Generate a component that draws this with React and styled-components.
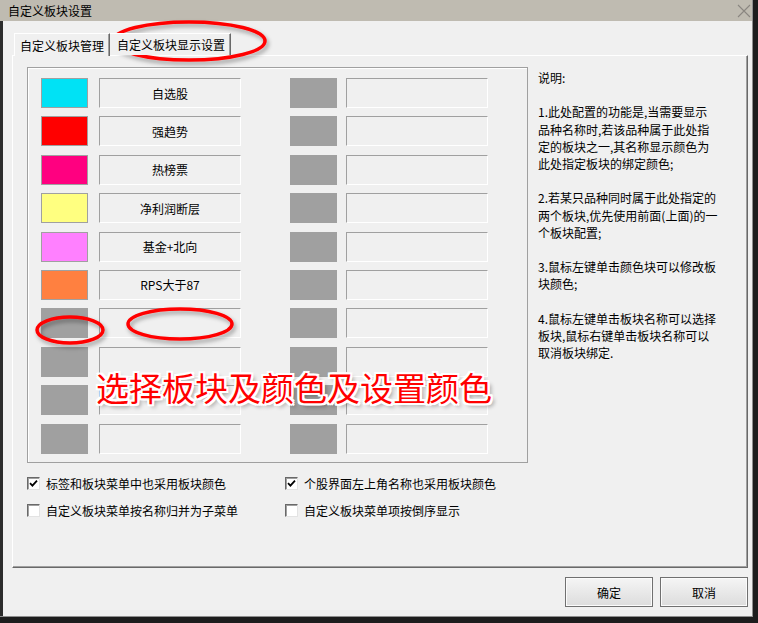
import React from "react"
import styled, { createGlobalStyle } from "styled-components"

const GlobalStyle = createGlobalStyle`
  html, body { margin: 0; padding: 0; }
  body {
    background: #1d1d1d;
    font-family: "Noto Sans CJK SC", "Liberation Sans", sans-serif;
    font-size: 12px;
    color: #000;
  }
`

const Screen = styled.div`
  position: relative;
  width: 758px;
  height: 623px;
  overflow: hidden;
  background: #1d1d1d;
`

const Window = styled.div`
  width: 753px;
  height: 617px;
  display: flex;
  flex-direction: column;
  box-sizing: border-box;
  border-right: 1px solid #8e8e8e;
  border-bottom: 1px solid #8e8e8e;
`

const TitleBar = styled.div`
  height: 21px;
  flex: none;
  background: #bfbbb1;
  display: flex;
  align-items: center;
  justify-content: space-between;
  padding: 0 1px 0 8px;
  font-size: 12px;
  color: #000;
`

const Body = styled.div`
  flex: 1;
  background: #f0f0f0;
  border-left: 3px solid #2c2c2c;
  padding: 10px 4px 0 9px;
  display: flex;
  flex-direction: column;
`

const TabRow = styled.div`
  height: 24px;
  display: flex;
  align-items: flex-end;
  padding-left: 2px;
  position: relative;
  z-index: 1;
`

const Tab = styled.div`
  box-sizing: border-box;
  height: ${p => (p.$active ? 23 : 22)}px;
  margin-bottom: ${p => (p.$active ? -1 : 0)}px;
  padding: 0 5px 0 ${p => (p.$active ? 5 : 7)}px;
  background: #f0f0f0;
  border-top: 1px solid #fff;
  border-left: ${p => (p.$active ? "1px solid #fff" : "none")};
  border-right: 1px solid #696969;
  box-shadow: inset -1px 0 #a0a0a0;
  display: flex;
  align-items: center;
  white-space: nowrap;
`

const Panel = styled.div`
  box-sizing: border-box;
  height: 513px;
  border-top: 1px solid #fff;
  border-left: 1px solid #fff;
  border-right: 1px solid #696969;
  border-bottom: 1px solid #696969;
  box-shadow: inset -1px -1px #a0a0a0;
  padding: 11px 0 0 14px;
  display: flex;
  flex-direction: column;
`

const TopRow = styled.div`
  display: flex;
  align-items: flex-start;
`

const GroupBox = styled.div`
  box-sizing: border-box;
  width: 501px;
  height: 396px;
  border: 1px solid #a0a0a0;
  box-shadow: inset 1px 1px #fff;
  padding: 10px 0 0 13px;
  display: flex;
  gap: 49px;
`

const Column = styled.div`
  display: flex;
  flex-direction: column;
  gap: 8.4px;
`

const Row = styled.div`
  display: flex;
  gap: ${p => p.$gap}px;
`

const Swatch = styled.div`
  box-sizing: border-box;
  width: 47px;
  height: 30px;
  background: ${p => p.$color};
  border: 1px solid #a0a0a0;
`

const NameBox = styled.div`
  box-sizing: border-box;
  width: 142px;
  height: 30px;
  border-top: 1px solid #a0a0a0;
  border-left: 1px solid #a0a0a0;
  border-right: 1px solid #fff;
  border-bottom: 1px solid #fff;
  display: flex;
  align-items: center;
  justify-content: center;
  font-size: 12px;
`

const Desc = styled.div`
  margin: 2px 0 0 10px;
  font-size: 12px;
  line-height: 17.2px;
  white-space: pre;
`

const CheckGrid = styled.div`
  margin-top: 14px;
  display: grid;
  grid-template-columns: 258px 1fr;
  row-gap: 14px;
`

const CheckItem = styled.label`
  display: flex;
  align-items: center;
  gap: 6px;
  height: 13px;
  font-size: 12px;
  white-space: nowrap;
`

const Box = styled.span`
  box-sizing: border-box;
  width: 13px;
  height: 13px;
  background: #fff;
  border-top: 1px solid #696969;
  border-left: 1px solid #696969;
  border-right: 1px solid #e3e3e3;
  border-bottom: 1px solid #e3e3e3;
  box-shadow: inset 1px 1px #a0a0a0;
  display: flex;
  align-items: center;
  justify-content: center;
`

const Footer = styled.div`
  margin-top: 9px;
  display: flex;
  justify-content: flex-end;
  gap: 7px;
`

const Button = styled.button`
  box-sizing: border-box;
  width: 88px;
  height: 30px;
  border: 1px solid #707070;
  background: linear-gradient(#f5f5f5, #dcdcdc);
  box-shadow: inset 0 0 0 1px #fbfbfb;
  font-family: inherit;
  font-size: 12px;
  color: #000;
  padding: 0;
`

const Overlay = styled.svg`
  position: absolute;
  left: 0;
  top: 0;
  pointer-events: none;
`

const Note = styled.div`
  position: absolute;
  left: 96px;
  top: 371px;
  font-size: 33px;
  line-height: 33px;
  color: #ff0000;
  white-space: nowrap;
  pointer-events: none;
  text-shadow: 2px 0 #fff, -2px 0 #fff, 0 2px #fff, 0 -2px #fff,
    2px 2px #fff, -2px -2px #fff, 2px -2px #fff, -2px 2px #fff,
    3px 3px 4px rgba(0, 0, 0, 0.45);
`

const blocks = [
  { color: "#00e2f5", name: "自选股" },
  { color: "#ff0000", name: "强趋势" },
  { color: "#ff0080", name: "热榜票" },
  { color: "#ffff80", name: "净利润断层" },
  { color: "#ff80ff", name: "基金+北向" },
  { color: "#ff8040", name: "RPS大于87" },
  { color: "#a0a0a0", name: "" },
  { color: "#a0a0a0", name: "" },
  { color: "#a0a0a0", name: "" },
  { color: "#a0a0a0", name: "" },
]

const empty = Array.from({ length: 10 }, () => ({ color: "#a0a0a0", name: "" }))

const descText = `说明:

1.此处配置的功能是,当需要显示
品种名称时,若该品种属于此处指
定的板块之一,其名称显示颜色为
此处指定板块的绑定颜色;

2.若某只品种同时属于此处指定的
两个板块,优先使用前面(上面)的一
个板块配置;

3.鼠标左键单击颜色块可以修改板
块颜色;

4.鼠标左键单击板块名称可以选择
板块,鼠标右键单击板块名称可以
取消板块绑定.`

function Check({ checked, children }) {
  return (
    <CheckItem>
      <Box>
        {checked && (
          <svg width="9" height="9" viewBox="0 0 9 9">
            <path d="M1 4.2 L3.4 6.6 L8 1.6" fill="none" stroke="#000" strokeWidth="1.8" />
          </svg>
        )}
      </Box>
      {children}
    </CheckItem>
  )
}

function BlockColumn({ items, gap }) {
  return (
    <Column>
      {items.map((b, i) => (
        <Row key={i} $gap={gap}>
          <Swatch $color={b.color} />
          <NameBox>{b.name}</NameBox>
        </Row>
      ))}
    </Column>
  )
}

export default function App() {
  return (
    <Screen>
      <GlobalStyle />
      <Window>
        <TitleBar>
          <span>自定义板块设置</span>
          <svg width="14" height="14" viewBox="0 0 14 14">
            <path d="M1 1 L13 13 M13 1 L1 13" stroke="#8a8680" strokeWidth="1.1" />
          </svg>
        </TitleBar>
        <Body>
          <TabRow>
            <Tab $active>自定义板块管理</Tab>
            <Tab>自定义板块显示设置</Tab>
          </TabRow>
          <Panel>
            <TopRow>
              <GroupBox>
                <BlockColumn items={blocks} gap={11} />
                <BlockColumn items={empty} gap={9} />
              </GroupBox>
              <Desc>{descText}</Desc>
            </TopRow>
            <CheckGrid>
              <Check checked>标签和板块菜单中也采用板块颜色</Check>
              <Check checked>个股界面左上角名称也采用板块颜色</Check>
              <Check>自定义板块菜单按名称归并为子菜单</Check>
              <Check>自定义板块菜单项按倒序显示</Check>
            </CheckGrid>
          </Panel>
          <Footer>
            <Button>确定</Button>
            <Button>取消</Button>
          </Footer>
        </Body>
      </Window>

      <Overlay width="758" height="623" viewBox="0 0 758 623">
        <defs>
          <filter id="shadow" x="-20%" y="-40%" width="140%" height="180%">
            <feDropShadow dx="2" dy="3" stdDeviation="2" floodColor="#000" floodOpacity="0.35" />
          </filter>
        </defs>
        <g fill="none" stroke="#ff0000" strokeWidth="3.5" filter="url(#shadow)">
          <ellipse cx="189" cy="41" rx="76" ry="19" />
          <ellipse cx="70" cy="330" rx="33" ry="13" />
          <ellipse cx="180" cy="324" rx="52" ry="15" />
        </g>
      </Overlay>
      <Note>选择板块及颜色及设置颜色</Note>
    </Screen>
  )
}
